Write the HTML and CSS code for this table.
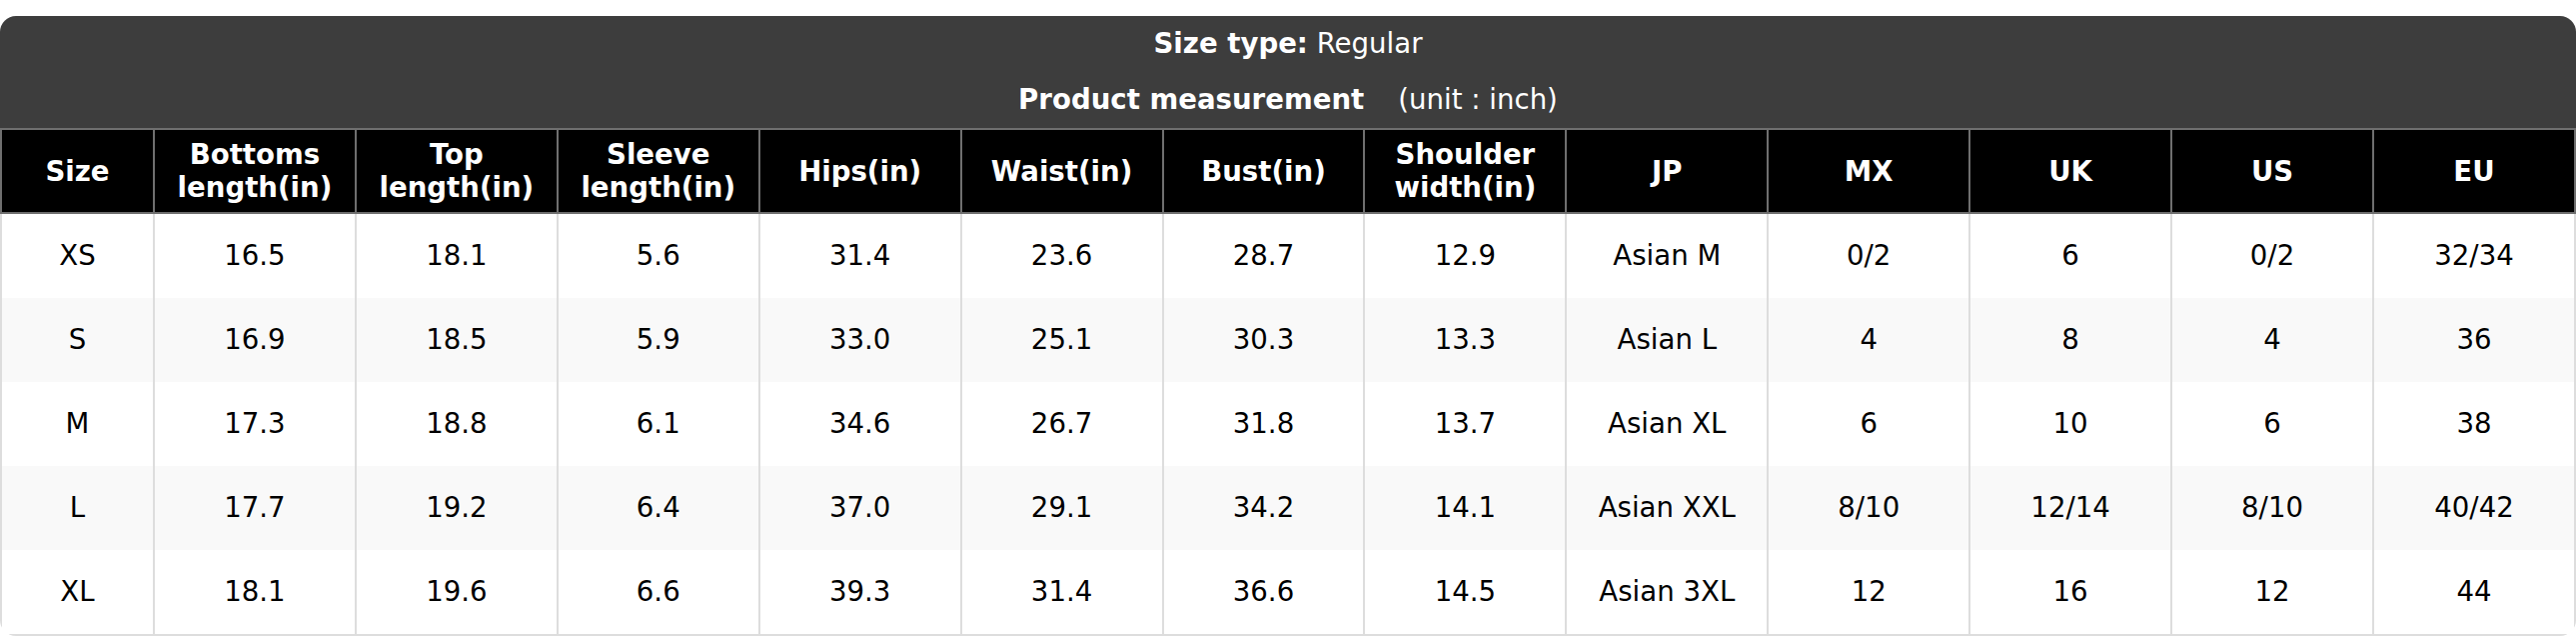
FILE: index.html
```html
<!DOCTYPE html>
<html lang="en">
<head>
<meta charset="utf-8">
<title>Size chart</title>
<link rel="stylesheet" href="styles.css">
</head>
<body>
<div class="chart">
  <div class="title">
    <div class="title-line"><b>Size type:</b> Regular</div>
    <div class="title-line"><b>Product measurement</b><span class="unit">(unit : inch)</span></div>
  </div>
  <table class="sizes">
    <colgroup>
      <col class="col-size">
      <col><col><col><col><col><col><col><col><col><col><col><col>
    </colgroup>
    <thead>
      <tr>
        <th>Size</th>
        <th>Bottoms<br>length(in)</th>
        <th>Top<br>length(in)</th>
        <th>Sleeve<br>length(in)</th>
        <th>Hips(in)</th>
        <th>Waist(in)</th>
        <th>Bust(in)</th>
        <th>Shoulder<br>width(in)</th>
        <th>JP</th>
        <th>MX</th>
        <th>UK</th>
        <th>US</th>
        <th>EU</th>
      </tr>
    </thead>
    <tbody>
      <tr><td>XS</td><td>16.5</td><td>18.1</td><td>5.6</td><td>31.4</td><td>23.6</td><td>28.7</td><td>12.9</td><td>Asian M</td><td>0/2</td><td>6</td><td>0/2</td><td>32/34</td></tr>
      <tr><td>S</td><td>16.9</td><td>18.5</td><td>5.9</td><td>33.0</td><td>25.1</td><td>30.3</td><td>13.3</td><td>Asian L</td><td>4</td><td>8</td><td>4</td><td>36</td></tr>
      <tr><td>M</td><td>17.3</td><td>18.8</td><td>6.1</td><td>34.6</td><td>26.7</td><td>31.8</td><td>13.7</td><td>Asian XL</td><td>6</td><td>10</td><td>6</td><td>38</td></tr>
      <tr><td>L</td><td>17.7</td><td>19.2</td><td>6.4</td><td>37.0</td><td>29.1</td><td>34.2</td><td>14.1</td><td>Asian XXL</td><td>8/10</td><td>12/14</td><td>8/10</td><td>40/42</td></tr>
      <tr><td>XL</td><td>18.1</td><td>19.6</td><td>6.6</td><td>39.3</td><td>31.4</td><td>36.6</td><td>14.5</td><td>Asian 3XL</td><td>12</td><td>16</td><td>12</td><td>44</td></tr>
    </tbody>
  </table>
</div>
</body>
</html>
```
FILE: styles.css
```css
html, body {
  margin: 0;
  padding: 0;
  background: #ffffff;
}

body {
  font-family: "DejaVu Sans", "Liberation Sans", sans-serif;
  font-size: 27.6px;
  color: #000000;
}

.chart {
  margin-top: 16px;
  border-radius: 16px;
  overflow: hidden;
  background: #ffffff;
}

.title {
  background: #3d3d3d;
  color: #ffffff;
  text-align: center;
}

.title-line {
  height: 56px;
  line-height: 56px;
}

.title-line b {
  font-weight: bold;
}

.unit {
  margin-left: 34px;
}

.sizes {
  width: 100%;
  table-layout: fixed;
  border-collapse: collapse;
  border-spacing: 0;
}

.col-size {
  width: 153px;
}

.sizes th {
  background: #000000;
  color: #ffffff;
  font-weight: bold;
  line-height: 33px;
  height: 82px;
  padding: 0 4px;
  text-align: center;
  vertical-align: middle;
  border: 2px solid #6f6f6f;
}

.sizes td {
  height: 84px;
  padding: 0 4px;
  text-align: center;
  vertical-align: middle;
  line-height: 32px;
  border-left: 2px solid #dddddd;
  border-right: 2px solid #dddddd;
}

.sizes tbody tr:nth-child(even) td {
  background: #f9f9f9;
}

.sizes tbody tr:last-child td {
  border-bottom: 2px solid #dddddd;
}
```
